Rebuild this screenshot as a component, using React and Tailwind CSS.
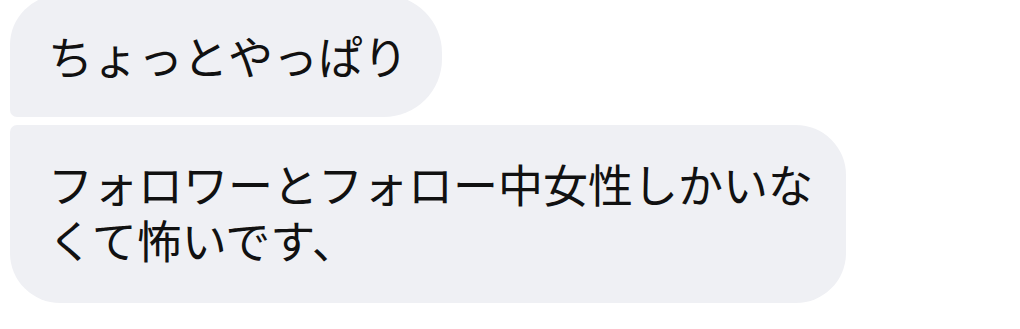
export default function App() {
  const font = { fontFamily: '"Noto Sans CJK JP", "Noto Sans", sans-serif' };
  return (
    <div className="w-[1020px] h-[329px] bg-white overflow-hidden" style={font}>
      <div className="flex flex-col items-start pl-[10px] mt-[-5px] gap-[8px]">
        <div className="bg-[#eff0f4] text-[#111111] text-[45px] leading-[57px] pl-[38px] pr-[34px] pt-[32px] pb-[33px] rounded-tl-[50px] rounded-tr-[58px] rounded-br-[58px] rounded-bl-[7px]">
          ちょっとやっぱり
        </div>
        <div className="w-[836px] bg-[#eff0f4] text-[#111111] text-[45px] leading-[56px] pl-[38px] pr-[30px] pt-[31px] pb-[35px] rounded-tl-[7px] rounded-tr-[50px] rounded-br-[50px] rounded-bl-[50px]">
          フォロワーとフォロー中女性しかいなくて怖いです、
        </div>
      </div>
    </div>
  );
}
